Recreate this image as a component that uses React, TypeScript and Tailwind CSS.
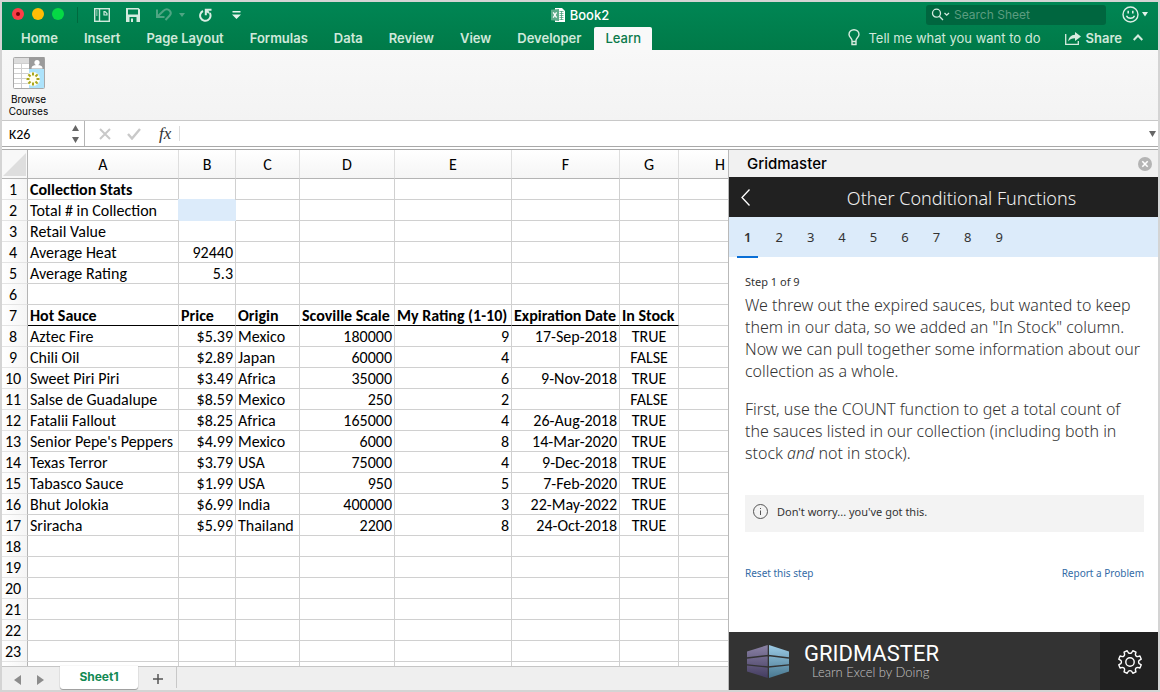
import React from "react";

const GRID = "font-['Carlito','Lato',sans-serif]";
const SEGOE = "font-['Noto_Sans','Open_Sans',sans-serif]";

const ribbonTabs = ["Home", "Insert", "Page Layout", "Formulas", "Data", "Review", "View", "Developer"];

type Column = { name: string; width: string; align: string };

const columns: Column[] = [
  { name: "A", width: "w-[151px]", align: "text-left" },
  { name: "B", width: "w-[57px]", align: "text-right" },
  { name: "C", width: "w-[64px]", align: "text-left" },
  { name: "D", width: "w-[95px]", align: "text-right" },
  { name: "E", width: "w-[117px]", align: "text-right" },
  { name: "F", width: "w-[108px]", align: "text-right" },
  { name: "G", width: "w-[59px]", align: "text-center" },
];

const sheet: string[][] = [
  ["Collection Stats"],
  ["Total # in Collection"],
  ["Retail Value"],
  ["Average Heat", "92440"],
  ["Average Rating", "5.3"],
  [],
  ["Hot Sauce", "Price", "Origin", "Scoville Scale", "My Rating (1-10)", "Expiration Date", "In Stock"],
  ["Aztec Fire", "$5.39", "Mexico", "180000", "9", "17-Sep-2018", "TRUE"],
  ["Chili Oil", "$2.89", "Japan", "60000", "4", "", "FALSE"],
  ["Sweet Piri Piri", "$3.49", "Africa", "35000", "6", "9-Nov-2018", "TRUE"],
  ["Salse de Guadalupe", "$8.59", "Mexico", "250", "2", "", "FALSE"],
  ["Fatalii Fallout", "$8.25", "Africa", "165000", "4", "26-Aug-2018", "TRUE"],
  ["Senior Pepe's Peppers", "$4.99", "Mexico", "6000", "8", "14-Mar-2020", "TRUE"],
  ["Texas Terror", "$3.79", "USA", "75000", "4", "9-Dec-2018", "TRUE"],
  ["Tabasco Sauce", "$1.99", "USA", "950", "5", "7-Feb-2020", "TRUE"],
  ["Bhut Jolokia", "$6.99", "India", "400000", "3", "22-May-2022", "TRUE"],
  ["Sriracha", "$5.99", "Thailand", "2200", "8", "24-Oct-2018", "TRUE"],
  [], [], [], [], [], [],
];

function TitleBar() {
  return (
    <div className="flex h-[25px] items-center">
      <div className="flex flex-1 items-center pl-2.5">
        <div className="flex gap-2 pb-0.5">
          <button aria-label="Close window" className="flex size-3 items-center justify-center rounded-full bg-[#fc3d47]">
            <span className="size-1 rounded-full bg-[#7a0008]" />
          </button>
          <button aria-label="Minimize window" className="size-3 rounded-full bg-[#ffbd05]" />
          <button aria-label="Zoom window" className="size-3 rounded-full bg-[#05d945]" />
        </div>
        <span className="ml-[13px] h-4 w-px bg-[#00693e]" />
        <button aria-label="New from template" className="ml-4">
          <svg width="16" height="14" viewBox="0 0 16 14" fill="none" stroke="#cfe9dc" strokeWidth="1.4">
            <rect x="0.7" y="0.7" width="14.6" height="12.6" />
            <path d="M5.500 1v12" />
            <path d="M2 3h1.600M2 5h1.600M2 7h1.600" strokeWidth="1" />
            <path d="M10 3.500h1l2 2v1.500h-3z" strokeWidth="1.200" />
          </svg>
        </button>
        <button aria-label="Save" className="ml-4">
          <svg width="14" height="14" viewBox="0 0 14 14">
            <path fillRule="evenodd" fill="#d4ebdf" d="M0 0h12.500L14 1.500V14H0zM2 1.500V6.500H12V1.500zM3.500 9V14H5V10.500H7V14H10.500V9z" />
          </svg>
        </button>
        <button aria-label="Undo" className="ml-4">
          <svg width="16" height="13" viewBox="0 0 16 13" fill="none" stroke="#4fa583" strokeWidth="2">
            <path d="M1 1.500v7.500h7.500M1.500 8.500L7.500 2.800C9.500 1 12 1 13.500 2.500C15 4 15 6.200 13.500 7.800L9.500 12" />
          </svg>
        </button>
        <svg className="ml-[7px]" width="6" height="4" viewBox="0 0 6 4"><path d="M0 0h6L3 4z" fill="#4fa583" /></svg>
        <button aria-label="Redo" className="ml-3.5">
          <svg width="13" height="14" viewBox="0 0 13 14" fill="none" stroke="#d9eee4" strokeWidth="2">
            <path d="M4 3A5.200 5.200 0 1 0 10.800 5M6.800 7.200V1.800H12.500M7 2L10 5" />
          </svg>
        </button>
        <button aria-label="Customize toolbar" className="ml-5">
          <svg width="9" height="8" viewBox="0 0 9 8"><path d="M0.500 0h8v1.500h-8zM0 3.500h9L4.500 8z" fill="#e4f3ec" /></svg>
        </button>
      </div>
      <div className="flex items-center gap-[5px] text-[13px] leading-4 font-medium text-white">
        <svg width="14" height="14" viewBox="0 0 14 14">
          <path d="M4 0h7l3 3v11H4z" fill="#fff" />
          <path d="M8.500 3.500h4M8.500 5.500h4M8.500 7.500h4M8.500 9.500h4M8.500 11.500h4M10.500 3v9" stroke="#3d9a72" strokeWidth="0.700" />
          <path d="M0 1.700L8 1v12L0 12.300z" fill="#5cab89" />
          <path d="M2.200 4.300L5.600 9.700M5.600 4.300L2.200 9.700" stroke="#fff" strokeWidth="1.300" />
        </svg>
        Book2
      </div>
      <div className="flex flex-1 items-center justify-end pr-2.5">
        <label className="flex h-5 w-[180px] items-center rounded-[3px] bg-[#00663f] pl-[5px]">
          <svg className="shrink-0" width="19" height="13" viewBox="0 0 19 13" fill="none" stroke="#d5eae0" strokeWidth="1.300">
            <circle cx="5.500" cy="5.200" r="4" />
            <path d="M8.300 8.200L12 12" />
            <path d="M13.500 5l2.200 2.200L18 5" />
          </svg>
          <input aria-label="Search Sheet" placeholder="Search Sheet" className="ml-1 w-full min-w-0 bg-transparent text-[12px] leading-4 outline-none placeholder:text-[#5b9d80]" />
        </label>
        <button aria-label="Feedback" className="ml-4 flex items-center gap-[3px]">
          <svg width="17" height="17" viewBox="0 0 17 17" fill="none" stroke="#dceee6" strokeWidth="1.400">
            <circle cx="8.500" cy="8.500" r="7.500" />
            <path d="M4.500 9.800c1.200 3.200 6.800 3.200 8 0" />
            <path d="M6.200 4.800v2.700M10.800 4.800v2.700" strokeWidth="1.600" />
          </svg>
          <svg width="6" height="5" viewBox="0 0 6 5"><path d="M0 0h6L3 4.500z" fill="#e4f3ec" /></svg>
        </button>
      </div>
    </div>
  );
}

function RibbonTabs() {
  return (
    <div className="flex h-[23px] items-stretch pl-1.5 text-[13px] leading-4 font-semibold text-[#d0e9db]">
      {ribbonTabs.map((t) => (
        <button key={t} className="px-[13px] pb-0.5 whitespace-nowrap">{t}</button>
      ))}
      <button className="rounded-t-xs bg-[#f9f9f9] px-[11px] pb-0.5 font-medium text-[#0b7a4b]">Learn</button>
      <div className="ml-auto flex items-center pr-[15px] pb-0.5">
        <button className="flex items-center gap-2 font-normal whitespace-nowrap">
          <svg width="12" height="17" viewBox="0 0 12 17" fill="none" stroke="#d6ecdf" strokeWidth="1.400">
            <path d="M4 11.500C4 9 1 8.500 1 5.500a5 4.800 0 0 1 10 0C11 8.500 8 9 8 11.500v4H4zM4 12.500h4" />
          </svg>
          Tell me what you want to do
        </button>
        <button className="ml-6 flex items-center gap-[5px]">
          <svg width="16" height="14" viewBox="0 0 16 14">
            <path d="M0.700 3v10.300h12.600V10" fill="none" stroke="#d6ecdf" strokeWidth="1.300" />
            <path d="M10 1l6 4.500-6 4.500V7.300C7 7.200 5 8.200 3.300 10.500 3.500 6.500 6 3.900 10 3.700z" fill="#d6ecdf" />
          </svg>
          Share
        </button>
        <button aria-label="Collapse ribbon" className="ml-[11px]">
          <svg width="10" height="7" viewBox="0 0 10 7" fill="none" stroke="#d6ecdf" strokeWidth="2"><path d="M0.700 6L5 1.500 9.300 6" /></svg>
        </button>
      </div>
    </div>
  );
}

function Ribbon() {
  const rays = [0, 45, 90, 135, 180, 225, 270, 315];
  return (
    <div className="h-[71px] border-b border-[#c8c8c8] bg-linear-to-b from-[#f8f8f8] to-[#f3f3f3] pt-[7px] pl-1">
      <button className="flex w-[45px] flex-col items-center text-[10px] leading-3 text-black">
        <svg className="mb-1" width="32" height="32" viewBox="0 0 32 32">
          <rect x="0.500" y="0.500" width="31" height="31" rx="1" fill="#fff" stroke="#a9a9a9" />
          <path d="M1 1h15v5H1z" fill="#dcdcdc" />
          <path d="M1 6.500h15M1 11.500h15M1 16.500h15M1 21.500h15M1 26.500h15M8.500 6v25" stroke="#cfcfcf" />
          <path d="M16 0h15.500v12H16z" fill="#9b9b9b" />
          <path d="M16 12h15v19H16z" fill="#ade3fb" />
          <circle cx="24" cy="5.500" r="2.600" fill="#fff" />
          <path d="M18.500 11.500c0-3 3-3.500 5.500-3.500s5.500.500 5.500 3.500z" fill="#fff" />
          <circle cx="20" cy="22" r="7" fill="#fffef0" />
          {rays.map((a) => (
            <path key={a} d="M20 18.500v-3" stroke="#a9a51b" strokeWidth="2" transform={`rotate(${a} 20 22)`} />
          ))}
        </svg>
        Browse Courses
      </button>
    </div>
  );
}

function FormulaBar() {
  return (
    <div className="flex h-[29px] items-stretch border-b border-[#a9a9a9] bg-white">
      <div className="mb-0.5 flex w-full items-center border-b border-[#a9a9a9]">
        <div className="flex h-full w-[83px] shrink-0 items-center border-r border-[#b5b5b5] pl-[7px]">
          <input aria-label="Name box" defaultValue="K26" className={`w-[63px] bg-transparent pt-[3px] text-[14px] leading-4 text-black outline-none ${GRID}`} />
          <svg width="7" height="18" viewBox="0 0 7 18" fill="#666"><path d="M0 6L3.500 0 7 6zM0 12h7L3.500 18z" /></svg>
        </div>
        <button aria-label="Cancel" className="ml-3.5">
          <svg width="12" height="12" viewBox="0 0 12 12" stroke="#c9c9c9" strokeWidth="2"><path d="M1 1l10 10M11 1L1 11" /></svg>
        </button>
        <button aria-label="Enter" className="ml-4">
          <svg width="14" height="12" viewBox="0 0 14 12" fill="none" stroke="#c9c9c9" strokeWidth="2.400"><path d="M1 6l4 4.500L13 1" /></svg>
        </button>
        <button aria-label="Insert function" className="ml-[18px] font-['Liberation_Serif',serif] text-[17px] leading-5 italic text-[#333]">fx</button>
        <span className="ml-2 h-[15px] w-px bg-[#dcdcdc]" />
        <input aria-label="Formula" className="min-w-0 flex-1 bg-transparent px-2 outline-none" />
        <svg className="mr-0.5" width="7" height="6" viewBox="0 0 7 6"><path d="M0 0h7L3.500 6z" fill="#666" /></svg>
      </div>
    </div>
  );
}

function cellClass(row: number, col: number, align: string) {
  const bold = row === 7 || (row === 1 && col === 0);
  const base = "h-[21px] p-0 px-[2px] pt-0.5 border-r whitespace-nowrap";
  const bottom = row === 7 ? "border-b border-r-[#d0d0d0] border-b-black" : "border-b border-[#d0d0d0]";
  const place = row === 7 ? "text-left" : align;
  const active = row === 2 && col === 1 ? "border-[#dcebfa] bg-[#dcebfa] shadow-[-1px_-1px_0_#dcebfa]" : bottom;
  return `${base} ${active} ${place} ${bold ? "font-bold" : ""}`;
}

function Sheet() {
  return (
    <div className="min-h-0 flex-1 overflow-hidden">
      <table className={`w-full table-fixed border-separate border-spacing-0 text-[16px] leading-[18px] text-black ${GRID}`}>
        <colgroup>
          <col className="w-[26px]" />
          {columns.map((c) => <col key={c.name} className={c.width} />)}
          <col />
        </colgroup>
        <thead>
          <tr>
            <th className="h-[29px] border-r border-b border-[#b4b4b4] bg-[#f8f8f8] p-0">
              <svg className="mt-px ml-px" width="23" height="24" viewBox="0 0 23 24"><path d="M23 0v23H0z" fill="#dedede" /></svg>
            </th>
            {columns.map((c) => (
              <th key={c.name} scope="col" className="h-[29px] border-r border-b border-r-[#dedede] border-b-[#b4b4b4] bg-linear-to-b from-white to-[#f5f5f5] p-0 pt-0.5 font-normal">{c.name}</th>
            ))}
            <th scope="col" className="h-[29px] border-b border-[#b4b4b4] bg-linear-to-b from-white to-[#f5f5f5] p-0 pt-0.5 pr-[3px] text-right font-normal">H</th>
          </tr>
        </thead>
        <tbody>
          {sheet.map((cells, i) => (
            <tr key={i}>
              <th scope="row" className="h-[21px] border-r border-b border-r-[#b4b4b4] border-b-[#e4e4e4] bg-linear-to-r from-white to-[#f5f5f5] p-0 pt-0.5 pr-[3px] font-normal">{i + 1}</th>
              {columns.map((c, j) => (
                <td key={c.name} className={cellClass(i + 1, j, c.align)}>{cells[j] ?? ""}</td>
              ))}
              <td className="h-[21px] border-b border-[#d0d0d0] p-0" />
            </tr>
          ))}
          <tr>
            <th className="h-[21px] border-r border-[#b4b4b4] bg-linear-to-r from-white to-[#f5f5f5] p-0" />
            {columns.map((c) => (
              <td key={c.name} className="border-r border-[#d0d0d0] p-0" />
            ))}
            <td className="p-0" />
          </tr>
        </tbody>
      </table>
    </div>
  );
}

function SheetTabs() {
  return (
    <div className="flex h-6 shrink-0 items-start border-t border-[#c6c6c6] bg-[#efefef]">
      <button aria-label="Previous sheet" className="mt-2 ml-3"><svg width="7" height="10" viewBox="0 0 7 10"><path d="M7 0v10L0 5z" fill="#8c8c8c" /></svg></button>
      <button aria-label="Next sheet" className="mt-2 ml-4"><svg width="7" height="10" viewBox="0 0 7 10"><path d="M0 0v10l7-5z" fill="#8c8c8c" /></svg></button>
      <button className="-mt-px ml-4 h-[23px] w-[78px] rounded-b-[3px] bg-white pb-0.5 text-[12px] leading-4 font-bold text-[#128a53] shadow-[0_1px_1px_#999,0_0_1px_#aaa]">Sheet1</button>
      <button aria-label="Add sheet" className="mt-[7px] ml-[15px]"><svg width="10" height="10" viewBox="0 0 10 10" stroke="#555" strokeWidth="1.500"><path d="M5 0v10M0 5h10" /></svg></button>
      <span className="ml-[13px] h-[21px] w-px bg-[#c8c8c8]" />
    </div>
  );
}

function Logo() {
  return (
    <svg width="42" height="33" viewBox="0 0 42 33">
      <defs>
        <linearGradient id="left" x1="0" y1="0" x2="0" y2="1"><stop offset="0" stopColor="#8b82a5" /><stop offset="1" stopColor="#433c60" /></linearGradient>
        <linearGradient id="right" x1="0" y1="0" x2="0" y2="1"><stop offset="0" stopColor="#9ccbe6" /><stop offset="1" stopColor="#487890" /></linearGradient>
      </defs>
      <path d="M0 6.500L20.700 0v33L0 26.500z" fill="url(#left)" />
      <path d="M22 0l20 6.500v20L22 33z" fill="url(#right)" />
      <path d="M0 13L21.300 10.500 42 13M0 19.800L21.300 22 42 19.800" fill="none" stroke="#333" strokeWidth="1.300" />
    </svg>
  );
}

function Gear() {
  const teeth = Array.from({ length: 8 }, (_, i) => {
    const at = (deg: number, r: number) => {
      const a = ((i * 45 + deg) * Math.PI) / 180;
      return `${(13 + r * Math.sin(a)).toFixed(2)} ${(13 - r * Math.cos(a)).toFixed(2)}`;
    };
    return `${i === 0 ? "M" : "L"}${at(10, 9.4)}L${at(14, 11.6)}L${at(31, 11.6)}L${at(35, 9.4)}A2.300 2.300 0 0 0 ${at(55, 9.4)}`;
  }).join("");
  return (
    <svg width="26" height="26" viewBox="0 0 26 26" fill="none" stroke="#fff" strokeWidth="1.400" strokeLinejoin="round">
      <path d={teeth + "Z"} />
      <circle cx="13" cy="13" r="4.200" />
    </svg>
  );
}

function CoursePane() {
  return (
    <aside className={`flex w-[430px] shrink-0 flex-col border-l border-[#b9b9b9] bg-white text-[#333] ${SEGOE}`}>
      <div className="flex h-[27px] shrink-0 items-center justify-between bg-[#f1f1f1] pr-[6px] pl-[18px] font-['Inter',sans-serif] text-[15px] leading-5 font-medium text-black">
        Gridmaster
        <button aria-label="Close pane">
          <svg width="14" height="14" viewBox="0 0 14 14"><circle cx="7" cy="7" r="7" fill="#b4b4b4" /><path d="M4.300 4.300l5.400 5.400M9.700 4.300L4.300 9.700" stroke="#fff" strokeWidth="1.600" /></svg>
        </button>
      </div>
      <div className="flex h-10 shrink-0 items-center bg-[#212121] px-3">
        <button aria-label="Back" className="w-6">
          <svg width="9" height="17" viewBox="0 0 9 17" fill="none" stroke="#fff" strokeWidth="1.300"><path d="M8.500 0.500L1 8.500l7.500 8" /></svg>
        </button>
        <h1 className="flex-1 pt-0.5 pl-3 text-center text-[18px] leading-6 font-light text-[#f0f0f0]">Other Conditional Functions</h1>
      </div>
      <nav className="flex h-10 shrink-0 bg-[#dcebfa] pl-[3px] text-[13px] leading-4">
        {["1", "2", "3", "4", "5", "6", "7", "8", "9"].map((n) => (
          <button
            key={n}
            className={n === "1" ? "relative px-3 font-semibold after:absolute after:inset-x-[5px] after:-bottom-px after:h-0.5 after:bg-[#0a6fd6]" : "px-3"}
          >
            {n}
          </button>
        ))}
      </nav>
      <div className="flex-1 pt-[17px] pr-3.5 pl-4">
        <div className="text-[11px] leading-4">Step 1 of 9</div>
        <p className="mt-1 text-[16px] leading-[22px] font-light">
          We threw out the expired sauces, but wanted to keep them in our data, so we added an "In Stock" column. Now we can pull together some information about our collection as a whole.
        </p>
        <p className="mt-4 text-[16px] leading-[22px] font-light">
          First, use the COUNT function to get a total count of the sauces listed in our collection (including both in stock <em>and</em> not in stock).
        </p>
        <div className="mt-[31px] flex h-[37px] items-center gap-[9px] bg-[#f3f3f3] pb-1 pl-2 text-[11px] leading-4">
          <svg width="15" height="15" viewBox="0 0 15 15" fill="none" stroke="#555"><circle cx="7.500" cy="7.500" r="7" /><path d="M7.500 6.500v4.500M7.500 4v1" /></svg>
          Don't worry... you've got this.
        </div>
        <div className="mt-[33px] flex justify-between text-[10px] leading-4 text-[#336ba6]">
          <a href="#reset">Reset this step</a>
          <a href="#report">Report a Problem</a>
        </div>
      </div>
      <footer className="flex h-[58px] shrink-0 items-center bg-[#333] pl-[18px]">
        <Logo />
        <div className="ml-[15px] flex flex-1 flex-col pt-0.5">
          <span className="font-['Roboto',sans-serif] text-[22px] leading-5 font-normal text-white">GRIDMASTER</span>
          <span className="pl-2 font-['Lato',sans-serif] text-[13px] leading-4 font-light text-[#c4c4c4]">Learn Excel by Doing</span>
        </div>
        <button aria-label="Settings" className="flex h-full w-[58px] items-center justify-center bg-[#212121] pt-0.5 pl-0.5"><Gear /></button>
      </footer>
    </aside>
  );
}

export default function App() {
  return (
    <div className="flex h-screen flex-col overflow-hidden border-2 border-[#d4d4d4] bg-white font-['Inter',sans-serif]">
      <header className="-mb-px shrink-0 border-b border-[#00693e] bg-linear-to-b from-[#008654] to-[#007a48]">
        <TitleBar />
        <RibbonTabs />
      </header>
      <div className="shrink-0">
        <Ribbon />
        <FormulaBar />
      </div>
      <main className="flex min-h-0 flex-1">
        <section className="flex min-w-0 flex-1 flex-col">
          <Sheet />
          <SheetTabs />
        </section>
        <CoursePane />
      </main>
    </div>
  );
}
